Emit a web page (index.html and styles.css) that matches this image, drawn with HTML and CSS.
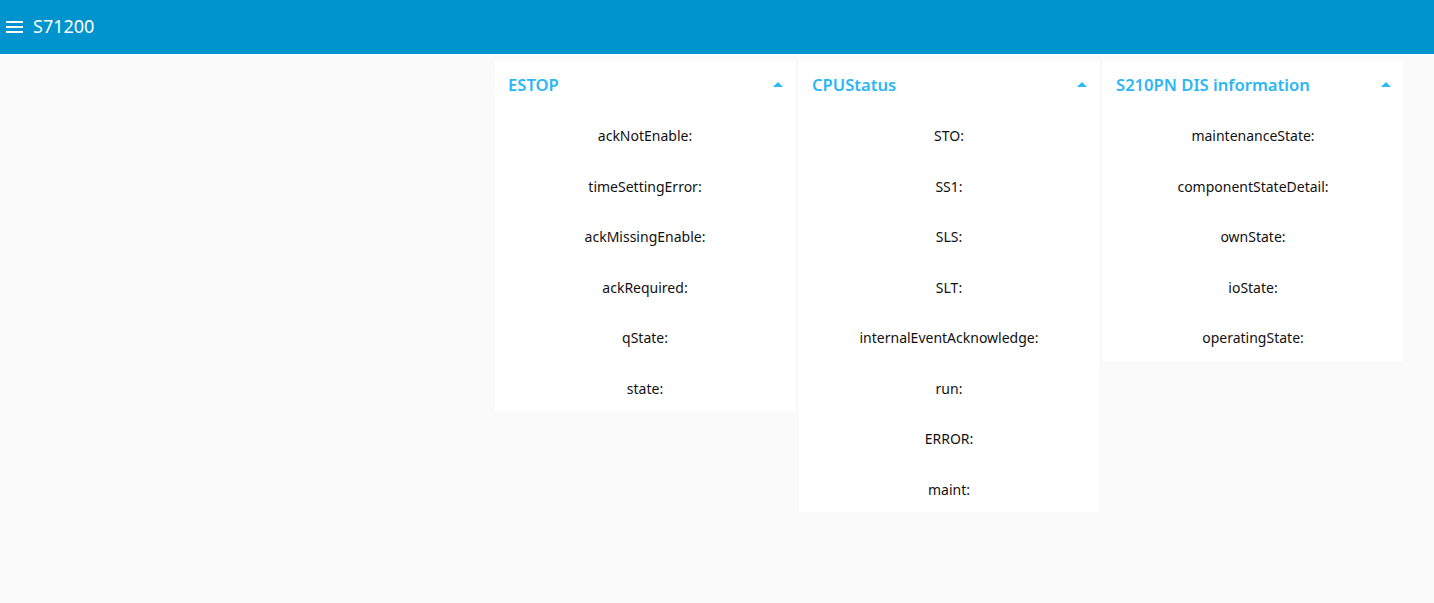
FILE: index.html
```html
<!DOCTYPE html>
<html>
<head>
<meta charset="utf-8">
<title>S71200</title>
<link rel="stylesheet" href="styles.css">
</head>
<body>
<header class="toolbar">
  <svg class="menu-icon" width="18" height="12" viewBox="0 0 18 12"><rect x="0" y="0" width="17" height="2" fill="#fff"/><rect x="0" y="5" width="17" height="2" fill="#fff"/><rect x="0" y="10" width="17" height="2" fill="#fff"/></svg>
  <span class="toolbar-title">S71200</span>
</header>
<main class="content">
  <section class="card">
    <div class="card-head"><span class="card-title">ESTOP</span><span class="caret"></span></div>
    <div class="row">ackNotEnable:</div>
    <div class="row">timeSettingError:</div>
    <div class="row">ackMissingEnable:</div>
    <div class="row">ackRequired:</div>
    <div class="row">qState:</div>
    <div class="row">state:</div>
  </section>
  <section class="card">
    <div class="card-head"><span class="card-title">CPUStatus</span><span class="caret"></span></div>
    <div class="row">STO:</div>
    <div class="row">SS1:</div>
    <div class="row">SLS:</div>
    <div class="row">SLT:</div>
    <div class="row">internalEventAcknowledge:</div>
    <div class="row">run:</div>
    <div class="row">ERROR:</div>
    <div class="row">maint:</div>
  </section>
  <section class="card">
    <div class="card-head"><span class="card-title">S210PN DIS information</span><span class="caret"></span></div>
    <div class="row">maintenanceState:</div>
    <div class="row">componentStateDetail:</div>
    <div class="row">ownState:</div>
    <div class="row">ioState:</div>
    <div class="row">operatingState:</div>
  </section>
</main>
</body>
</html>
```
FILE: styles.css
```css
html, body {
  margin: 0;
  padding: 0;
}
body {
  background: #fafafa;
  font-family: "Noto Sans", "Open Sans", sans-serif;
  color: #111;
  height: 603px;
  overflow: hidden;
}
.toolbar {
  height: 54px;
  background: #0094ce;
  display: flex;
  align-items: center;
  padding-left: 6px;
  box-sizing: border-box;
}
.menu-icon {
  display: block;
  margin-top: -1px;
}
.toolbar-title {
  color: #fff;
  font-size: 18px;
  margin-left: 9px;
  margin-top: -3px;
}
.content {
  display: flex;
  align-items: flex-start;
  gap: 4px;
  padding: 7px 0 0 495px;
}
.card {
  width: 300px;
  background: #fff;
}
.card-head {
  height: 47px;
  display: flex;
  align-items: center;
  justify-content: space-between;
  padding: 0 12px 0 13px;
}
.card-title {
  color: #2bb6f6;
  font-size: 16.6px;
  font-weight: 600;
  margin-top: -1px;
}
.caret {
  width: 0;
  height: 0;
  border-left: 5px solid transparent;
  border-right: 5px solid transparent;
  border-bottom: 5px solid #2bb6f6;
  margin-top: 0;
}
.row {
  height: 48px;
  margin-top: 2.5px;
  padding-top: 2px;
  box-sizing: border-box;
  display: flex;
  align-items: center;
  justify-content: center;
  font-size: 14px;
}
```
